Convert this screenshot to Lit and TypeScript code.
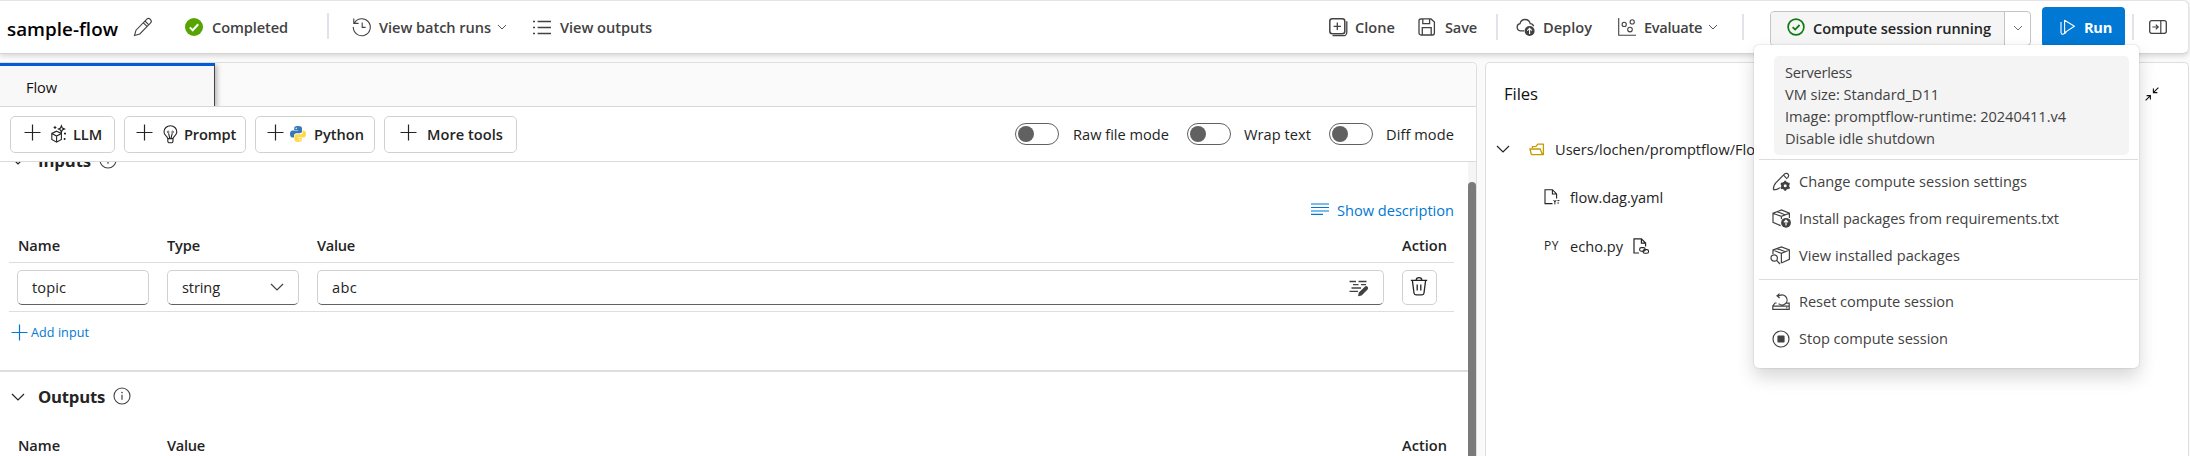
import { LitElement, html, svg, css, TemplateResult } from "lit";
import { customElement, property } from "lit/decorators.js";

const icons: Record<string, [number, number, TemplateResult]> = {
  pencil: [20, 20, svg`<path d="M1.5 18.5 L3 13.2 L13.6 2.4 a2.6 2.6 0 0 1 3.8 3.8 L6.8 17 Z M12 4 L15.8 7.8 M10.4 5.8 L14 9.4"/>`],
  done: [18, 18, svg`<circle cx="9" cy="9" r="9" fill="#57a300" stroke="none"/><path d="M4.8 9.4 L7.7 12.2 L13.2 6.2" stroke="#fff" stroke-width="2"/>`],
  history: [20, 20, svg`<path d="M2.3 6.2 A8.5 8.5 0 1 1 1.3 10 M1.8 1.6 V6.4 H6.6 M10.2 5.6 V10.4 H13.6"/>`],
  list: [18, 15, svg`<path d="M4.6 1.5 H18 M4.6 7.5 H18 M4.6 13.5 H18" stroke-width="1.3"/><path d="M0 1.5 H2 M0 7.5 H2 M0 13.5 H2 " stroke-width="1.6"/>`],
  chevS: [10, 10, svg`<path d="M1 3 L5 7 L9 3" stroke-width=".9"/>`],
  chev: [14, 14, svg`<path d="M1 4 L7 10 L13 4" stroke-width="1.2"/>`],
  clone: [19, 19, svg`<rect x=".8" y=".8" width="15" height="15" rx="2.5" stroke-width="1.5"/><path d="M8.3 4.6 V12 M4.6 8.3 H12 M17.8 3.2 V14.2 a3.5 3.5 0 0 1 -3.5 3.5 H3.6" stroke-width="1.3"/>`],
  save: [18, 18, svg`<path d="M3 .9 H13 L16.4 4 V15 a2 2 0 0 1 -2 2 H3 a2 2 0 0 1 -2 -2 V3 a2 2 0 0 1 2 -2 Z M4.8 1 V5.6 H11.6 V1 M4.3 17 V9.6 H13.2 V17" stroke-width="1.3"/>`],
  deploy: [19, 19, svg`<path d="M8.2 12.8 H4.4 a3.6 3.6 0 0 1 -.4 -7.1 a5.2 5.2 0 0 1 10.2 0 a3.6 3.6 0 0 1 3.4 2.6" stroke-width="1.3"/><circle cx="13.6" cy="13" r="5" fill="currentColor" stroke="none"/><path d="M13.6 16 V10.6 M11.3 12.6 L13.6 10.2 L15.9 12.6" stroke="#fff" stroke-width="1.1"/>`],
  evaluate: [18, 18, svg`<path d="M.7 0 V17.2 H18"/><circle cx="6.2" cy="6.4" r="2.1"/><circle cx="14.2" cy="3.9" r="2.1"/><circle cx="12" cy="11.6" r="2.3"/>`],
  running: [18, 18, svg`<circle cx="9" cy="9" r="7.9" stroke-width="1.7"/><path d="M5.6 9.2 L8.1 11.6 L12.6 7" stroke-width="1.8"/>`],
  play: [16, 18, svg`<path d="M4.6 2.2 L14.4 8.2 L4.6 14.6 Z M1 4 V14.6 a1.6 1.6 0 0 0 2.4 1.4 L6.4 14.4" stroke-width="1.1" stroke-linejoin="round"/>`],
  dock: [18, 14, svg`<rect x=".7" y=".7" width="16.6" height="12.6" rx="2" stroke-width="1.3"/><path d="M11.8 1 V13 M3.4 7 H9 M6.8 4.6 L9.2 7 L6.8 9.4" stroke-width="1.2"/>`],
  plus: [17, 17, svg`<path d="M8.5 .5 V16.5 M.5 8.5 H16.5" stroke-width="1.2"/>`],
  llm: [16, 18, svg`<path d="M5.6 6.2 L10.4 8.4 V14.4 L5.6 17.2 L.8 14.4 V8.4 Z M.8 8.4 L5.6 11 L10.4 8.4 M5.6 11 V17 M10.4 .8 L11.3 3 L13.6 4 L11.3 5 L10.4 7.2 L9.5 5 L7.4 4 L9.5 3 Z" stroke-width="1.1"/><path d="M4 1 V4 M2.6 2.5 H5.4 M14 7.6 V9.6 M13 8.6 H15 M13.6 13 V15 M12.6 14 H14.6" stroke-width="1.1"/>`],
  bulb: [15, 19, svg`<path d="M4.8 13.6 C4.6 11.4 1 10.4 1 6.9 a6.3 6.1 0 0 1 12.8 0 C13.8 10.4 10.2 11.4 10 13.6 Z M4.8 14 V16 a1.8 1.8 0 0 0 1.8 1.8 H8.2 A1.8 1.8 0 0 0 10 16 V14 M6.8 13.4 L5.6 8.4 M8 13.4 L9.2 8.4" stroke-width="1.1"/><circle cx="5.2" cy="7" r=".9" stroke-width=".7"/><circle cx="9.6" cy="7" r=".9" stroke-width=".7"/>`],
  python: [16, 16, svg`<path d="M7.8 0 C4.4 0 4.2 1.4 4.2 2.4 V4 H8.2 V4.6 H2.6 C.8 4.6 0 6 0 8 s.8 3.6 2.4 3.6 H4 V9.6 C4 8.2 5 7.2 6.4 7.2 H10 c1.2 0 2 -.8 2 -2 V2.4 C12 .8 10.6 0 7.8 0 Z" fill="#3478b8" stroke="none"/><path d="M8.2 16 C11.6 16 11.8 14.6 11.8 13.6 V12 H7.8 V11.4 H13.4 C15.2 11.4 16 10 16 8 S15.2 4.4 13.6 4.4 H12.6 V6.4 C12.6 7.8 11.6 8.2 10.2 8.2 H6.4 c-1.2 0 -2 .8 -2 2 V13.6 C4.4 15.2 5.4 16 8.2 16 Z" fill="#ffd94a" stroke="none"/><circle cx="6.2" cy="2.2" r=".8" fill="#fff" stroke="none"/><circle cx="9.8" cy="13.8" r=".8" fill="#fff" stroke="none"/>`],
  info: [18, 18, svg`<circle cx="9" cy="9" r="8"/><path d="M9 7.8 V12.8" stroke-width="1.2"/><circle cx="9" cy="5.6" r=".8" fill="currentColor" stroke="none"/>`],
  lines: [18, 12, svg`<path d="M0 1 H18 M0 4.5 H18 M0 8 H18 M0 11.3 H12" stroke-width="1.2"/>`],
  edit: [20, 18, svg`<path d="M.5 3.5 H7 M9.5 3.5 H17.5 M4 6.6 H9.5 M12 6.6 H17 M2.5 10 H12 M.5 13.4 H9" stroke-width="1.3"/><path d="M9 18.2 L9.8 14.6 L15.8 8.8 a1.9 1.9 0 0 1 2.8 2.7 L12.6 17.4 Z" fill="currentColor" stroke="none"/>`],
  trash: [18, 19, svg`<path d="M.8 3.4 H17.2 M6.2 3.2 a2.8 2.6 0 0 1 5.6 0 M2.4 3.6 L4 16 a2 2 0 0 0 2 1.8 H12 a2 2 0 0 0 2 -1.8 L15.6 3.6 M7.2 7.4 V13.4 M10.8 7.4 V13.4" stroke-width="1.3"/>`],
  folder: [16, 13, svg`<path d="M3.4 5 V3.6 L7 3.4 L8.8 1.2 H14.4 V11.6 H2.4 L.9 6 H11.2 L13.4 11.4" stroke-width="1.3" stroke-linejoin="round"/>`],
  yaml: [16, 16, svg`<path d="M8.5 14.6 H1 V.7 H8.4 L12.6 4.9 V9.6 M8.4 .8 V5 H12.6" stroke-width="1.1"/><path d="M9.6 11 L10.9 13 L12.2 11 M10.9 13 V15.4 M13.4 11.6 H15.4 M13.4 14 H15" stroke-width="1"/>`],
  link: [17, 17, svg`<path d="M6 15 H1 V.8 H8.4 L12.6 5 V8.4 M8.4 .9 V5.1 H12.6" stroke-width="1.2"/><rect x="6.6" y="9.6" width="5.6" height="3.6" rx="1.8" stroke-width="1.1"/><rect x="10" y="11.6" width="5.6" height="3.6" rx="1.8" stroke-width="1.1"/>`],
  shrink: [14, 14, svg`<path d="M13.4 .6 L8.6 5.4 M8.4 1.6 V5.6 H12.4 M.6 13.4 L5.2 8.8 M1.6 8.6 H5.4 V12.4" stroke-width="1.1"/>`],
  setting: [19, 19, svg`<path d="M1.4 17.8 C1.4 14.4 2.4 12.2 4 10.6 L12.4 2.2 a2.4 2.4 0 0 1 4.2 1 c.2 1.6 -.4 2.2 -1.2 3 M11.6 3.2 L15 6.8 M1.4 17.8 C4.6 17.8 6.4 17 8 15.6" stroke-width="1.2"/><circle cx="13.2" cy="13.8" r="2.8" stroke-width="2.6"/><path d="M13.2 8.8 V10.6 M13.2 17 V18.8 M8.8 11.3 L10.4 12.2 M16 15.4 L17.6 16.3 M8.8 16.3 L10.4 15.4 M16 12.2 L17.6 11.3" stroke-width="2"/>`],
  install: [19, 19, svg`<path d="M8.6 16.6 L1 13.4 V4.2 L9.4 1 L17.4 4.2 V9 M1 4.2 L9.4 7.4 L17.4 4.2 M9.4 7.4 V10 M5.2 2.6 L13.4 6" stroke-width="1.2"/><circle cx="14" cy="13.8" r="4.9" fill="currentColor" stroke="none"/><path d="M14 16.6 V11.6 M11.9 13.4 L14 11.2 L16.1 13.4" stroke="#fff" stroke-width="1.2"/>`],
  installed: [21, 19, svg`<path d="M3 8 V4 L11.4 1 L19.4 4 V13.4 L11.4 17 M3 4 L11.4 7.4 L19.4 4 M11.4 7.4 V17 M7 2.6 L15.4 5.8" stroke-width="1.2"/><circle cx="4.2" cy="12" r="3.2" stroke-width="1.2"/><path d="M6.6 14.4 L10 18" stroke-width="1.3"/>`],
  reset: [18, 18, svg`<path d="M4.6 10 H3 L.8 13 V16.4 H17.2 V10.2 H14 M.8 13.2 H17.2 M6.6 10.6 a5 5 0 1 0 1 -8 H5 M7.6 .6 L5 2.8 L7.6 5" stroke-width="1.2"/><path d="M14 14.8 H15.4" stroke-width="1"/>`],
  stop: [18, 18, svg`<circle cx="9" cy="9" r="8" stroke-width="1.2"/><rect x="5.4" y="5.4" width="7.2" height="7.2" rx="1" fill="currentColor" stroke="none"/>`],
};

@customElement("ui-icon")
class UiIcon extends LitElement {
  @property() name = "";
  static styles = css`
    :host { display: block; flex: none; }
    svg { display: block; fill: none; stroke: currentColor; stroke-width: 1.1; overflow: visible; }
  `;
  render() {
    const [w, h, body] = icons[this.name];
    return html`<svg width=${w} height=${h} viewBox="0 0 ${w} ${h}">${body}</svg>`;
  }
}

/** Single line of text whose tracking is adjusted to occupy a given width. */
@customElement("ui-label")
class UiLabel extends LitElement {
  @property({ type: Number }) w = 0;
  @property() text = "";
  static styles = css`
    :host { display: block; flex: none; white-space: pre; }
    span { display: inline-block; }
  `;
  render() {
    return html`<span>${this.text}</span>`;
  }
  firstUpdated() {
    const s = this.renderRoot.querySelector("span") as HTMLElement;
    const natural = s.getBoundingClientRect().width;
    s.style.letterSpacing = `${(this.w - natural) / this.text.length}px`;
    this.style.width = `${this.w}px`;
  }
}

const t = (text: string, w: number, cls = "") => html`<ui-label class=${cls} .text=${text} .w=${w}></ui-label>`;
const i = (name: string, cls = "") => html`<ui-icon class=${cls} .name=${name}></ui-icon>`;

@customElement("app-root")
class AppRoot extends LitElement {
  static styles = css`
    :host {
      display: block; position: relative; width: 2190px; height: 456px; overflow: hidden;
      background: #fafafa; color: #242424;
      font: 14.6px/24px "Open Sans", "Noto Sans", sans-serif;
    }
    * { box-sizing: border-box; }
    .semi { font-weight: 600; }
    .bold { font-weight: 700; }
    .row { display: flex; align-items: center; }
    .header {
      display: flex; align-items: center; width: 2189px; height: 54px; padding: 0 21px 0 7px;
      background: #fff; border: 1px solid #e4e4e4; border-left: 0; border-bottom-color: #d4d4d4;
      border-radius: 0 6px 6px 0; box-shadow: 0 2px 5px rgba(0,0,0,.14); color: #424242;
    }
    .title { font-size: 18.8px; font-weight: 600; color: #000; padding-top: 3px; }
    .pen { margin-left: 15px; }
    .status { gap: 9px; margin-left: 32px; }
    .rule { width: 2px; height: 26px; background: #e1e3e8; flex: none; }
    .r1 { margin-left: 39px; margin-top: -2px; }
    .batch { gap: 7px; margin-left: 23px; }
    .batch .c { margin-left: -1px; }
    .outs { gap: 9px; margin-left: 26px; }
    .right { margin-left: auto; }
    .clone { gap: 7px; }
    .save { gap: 9px; margin-left: 23px; }
    .r2 { margin-left: 19px; }
    .dep { margin-left: 18px; gap: 8px; }
    .eva { margin-left: 26px; gap: 8px; }
    .eva .c { margin-left: -2px; }
    .r3 { margin-left: 24px; }
    .compute {
      display: flex; width: 261px; height: 35px; margin: 2px 0 0 26px; border: 1px solid #c4c4c4;
      border-radius: 4px; color: #242424; background: #fff; overflow: hidden;
    }
    .session { display: flex; align-items: center; gap: 8px; width: 234px; padding-left: 16px; background: #f5f5f5; border-right: 1px solid #c4c4c4; }
    .ok { color: #107c10; margin-top: -2px; }
    .more { flex: 1; display: grid; place-items: center; color: #616161; }
    .run {
      display: flex; align-items: center; gap: 8px; width: 83px; height: 40px; margin: 0 0 0 11px;
      padding-left: 18px; background: #0078d4; color: #fff; border-radius: 4px;
    }
    .r4 { margin-left: 7px; }
    .dock { margin-left: 15px; }

    .body { display: flex; gap: 8px; height: 394px; margin-top: 8px; }
    .main { width: 1477px; height: 394px; border: 1px solid #dedede; border-left: 0; border-bottom: 0; border-radius: 0 5px 0 0; background: #fff; overflow: hidden; }
    .tabs { height: 44px; background: #fafafa; border-bottom: 1px solid #d8d8d8; }
    .tab {
      width: 215px; height: 43px; padding: 9px 0 0 26px; border-top: 3px solid #015cda;
      border-right: 1px solid #444; background: #f8f8f8; box-shadow: 2px 2px 5px rgba(0,0,0,.28); color: #111;
      clip-path: inset(0 -10px 0 0);
    }
    .tools { display: flex; align-items: center; height: 55px; padding: 0 22px 0 10px; border-bottom: 1px solid #dadada; }
    .btn { display: flex; align-items: center; height: 37px; border: 1px solid #d1d1d1; border-radius: 5px; padding-left: 13px; margin-right: 9px; }
    .llm { width: 105px; } .prompt { width: 122px; padding-left: 11px; } .python { width: 120px; padding-left: 11px; } .moret { width: 133px; padding-left: 15px; }
    .plus { margin-top: -3px; }
    .g10 { margin-left: 10px; } .g7 { margin-left: 6px; } .g8 { margin-left: 8px; }
    .toggles { display: flex; align-items: center; margin: -1px 0 0 auto; font-weight: 400; }
    .switch { display: flex; align-items: center; width: 44px; height: 22px; border: 1px solid #616161; border-radius: 11px; padding-left: 2px; margin-right: 14px; }
    .knob { width: 16px; height: 16px; border-radius: 50%; background: #616161; }
    .sw2 { margin-left: 18px; margin-right: 13px; }
    .scroll { display: flex; height: 294px; overflow: hidden; }
    .content { width: 1468px; height: 294px; overflow: hidden; }
    .track { width: 8px; padding-top: 20px; background: #f5f5f5; }
    .thumb { height: 300px; background: #7a7a7a; border-radius: 4px; }
    .head { display: flex; align-items: center; height: 24px; padding-left: 11px; font-size: 16.7px; font-weight: 700; }
    .inhead { margin-top: -13px; }
    .head .name { margin-left: 13px; }
    .info { color: #424242; margin: -2px 0 0 8px; }
    .show { display: flex; align-items: center; justify-content: flex-end; gap: 8px; height: 24px; margin-top: 25px; padding-right: 14px; color: #0078d4; }
    .show .ln { margin-top: -3px; }
    .grid { display: grid; grid-template-columns: 132px 132px 1067px 44px; gap: 18px; margin: 0 14px 0 9px; padding-left: 8px; border-bottom: 1px solid #dedede; }
    .th { align-items: center; height: 34px; margin-top: 7px; padding-bottom: 2px; font-weight: 600; }
    .th .first { padding-left: 1px; }
    .outs-th { margin-top: 20px; grid-template-columns: 132px 1217px 44px; }
    .tr { height: 49px; padding-top: 7px; }
    .field { display: flex; align-items: center; justify-content: space-between; height: 35px; padding: 0 14px 1px; border: 1px solid #d1d1d1; border-bottom-color: #616161; border-radius: 5px; }
    .field ui-icon { color: #424242; }
    .del { display: grid; place-items: center; width: 35px; height: 35px; padding: 0 1px 2px 0; border: 1px solid #d1d1d1; border-radius: 5px; }
    .add { display: flex; align-items: center; gap: 3px; height: 24px; margin-top: 8px; padding-left: 11px; color: #0078d4; font-size: 12.6px; }
    .add .txt { padding-top: 2px; }
    .sep { height: 2px; margin-top: 26px; background: #dedede; }
    .outhead { margin-top: 13px; }

    .files { width: 704px; height: 394px; background: #fff; border: 1px solid #dedede; border-bottom: 0; border-radius: 5px 5px 0 0; }
    .fhead { display: flex; align-items: center; justify-content: space-between; height: 24px; margin: 19px 29px 0 18px; font-size: 16.7px; color: #111; }
    .fold { display: flex; align-items: center; height: 24px; margin: 31px 0 0 10px; }
    .fold .fi { color: #c19c00; margin-left: 19px; }
    .fold .nm { margin-left: 10px; }
    .file { display: flex; align-items: center; height: 24px; margin: 24px 0 0 58px; }
    .file2 { margin-top: 25px; }
    .file .nm { margin-left: 10px; }
    .file .nm2 { margin-left: 11px; }
    .file .lk { margin-left: 10px; }
    .py { font-size: 12px; }

    .menu {
      position: absolute; left: 1754px; top: 45px; width: 385px; height: 323px; padding: 11px 1px 0 5px;
      background: #fff; border-radius: 5px; box-shadow: 0 0 2px rgba(0,0,0,.2), 0 9px 18px rgba(0,0,0,.16); color: #424242;
    }
    .vm { width: 355px; height: 99px; margin-left: 15px; padding: 5px 0 0 11px; background: #f4f4f4; border-radius: 5px; line-height: 22px; }
    .line { height: 1px; background: #dcdcdc; }
    .l1 { margin: 4px 0 3px; } .l2 { margin: 5px 0 3px; }
    .item { display: grid; grid-template-columns: 27px 1fr; align-items: center; height: 37px; margin-left: 13px; }
    .item .ic { justify-self: start; }
    .item .tx { margin-top: -1px; }
    .item .out { margin-left: -2px; }
  `;
  render() {
    return html`
      <header class="header">
        ${t("sample-flow", 111, "title")}${i("pencil", "pen")}
        <div class="row status">${i("done")}${t("Completed", 76, "semi")}</div>
        <div class="rule r1"></div>
        <div class="row batch">${i("history")}${t("View batch runs", 112, "semi")}${i("chevS", "c")}</div>
        <div class="row outs">${i("list")}${t("View outputs", 92, "semi")}</div>
        <div class="row right">
          <div class="row clone">${i("clone")}${t("Clone", 40, "semi")}</div>
          <div class="row save">${i("save")}${t("Save", 32, "semi")}</div>
          <div class="rule r2"></div>
          <div class="row dep">${i("deploy")}${t("Deploy", 49, "semi")}</div>
          <div class="row eva">${i("evaluate")}${t("Evaluate", 58, "semi")}${i("chevS", "c")}</div>
          <div class="rule r3"></div>
          <div class="compute">
            <div class="session semi">${i("running", "ok")}${t("Compute session running", 178)}</div>
            <div class="more">${i("chevS")}</div>
          </div>
          <div class="run bold">${i("play")}${t("Run", 28)}</div>
          <div class="rule r4"></div>
          ${i("dock", "dock")}
        </div>
      </header>
      <div class="body">
        <section class="main">
          <div class="tabs"><div class="tab">${t("Flow", 31)}</div></div>
          <div class="tools semi">
            <div class="btn llm">${i("plus", "plus")}${i("llm", "g10")}${t("LLM", 29, "g7")}</div>
            <div class="btn prompt">${i("plus", "plus")}${i("bulb", "g10")}${t("Prompt", 52, "g7")}</div>
            <div class="btn python">${i("plus", "plus")}${i("python", "g7")}${t("Python", 50, "g8")}</div>
            <div class="btn moret">${i("plus", "plus")}${t("More tools", 76, "g10")}</div>
            <div class="toggles">
              <div class="switch"><div class="knob"></div></div>${t("Raw file mode", 96)}
              <div class="switch sw2"><div class="knob"></div></div>${t("Wrap text", 67)}
              <div class="switch sw2"><div class="knob"></div></div>${t("Diff mode", 68)}
            </div>
          </div>
          <div class="scroll">
            <div class="content">
              <div class="head inhead">${i("chev")}${t("Inputs", 53, "name")}${i("info", "info")}</div>
              <div class="show">${i("lines", "ln")}${t("Show description", 117)}</div>
              <div class="grid th">${t("Name", 42, "first")}${t("Type", 33)}${t("Value", 38)}${t("Action", 45)}</div>
              <div class="grid tr">
                <div class="field">${t("topic", 34)}</div>
                <div class="field">${t("string", 38)}${i("chev")}</div>
                <div class="field">${t("abc", 25)}${i("edit")}</div>
                <div class="del">${i("trash")}</div>
              </div>
              <div class="add">${i("plus")}${t("Add input", 58, "txt")}</div>
              <div class="sep"></div>
              <div class="head outhead">${i("chev")}${t("Outputs", 67, "name")}${i("info", "info")}</div>
              <div class="grid th outs-th">${t("Name", 42, "first")}${t("Value", 38)}${t("Action", 45)}</div>
            </div>
            <div class="track"><div class="thumb"></div></div>
          </div>
        </section>
        <section class="files">
          <div class="fhead">${t("Files", 34)}${i("shrink")}</div>
          <div class="fold">${i("chev")}${i("folder", "fi")}${t("Users/lochen/promptflow/Flo", 200, "nm")}</div>
          <div class="file">${i("yaml")}${t("flow.dag.yaml", 93, "nm")}</div>
          <div class="file file2">${t("PY", 15, "py")}${t("echo.py", 53, "nm2")}${i("link", "lk")}</div>
        </section>
      </div>
      <div class="menu">
        <div class="vm">
          ${t("Serverless", 67)}${t("VM size: Standard_D11", 154)}
          ${t("Image: promptflow-runtime: 20240411.v4", 281)}${t("Disable idle shutdown", 150)}
        </div>
        <div class="line l1"></div>
        <div class="item">${i("setting", "ic")}${t("Change compute session settings", 228, "tx")}</div>
        <div class="item">${i("install", "ic")}${t("Install packages from requirements.txt", 260, "tx")}</div>
        <div class="item">${i("installed", "ic out")}${t("View installed packages", 161, "tx")}</div>
        <div class="line l2"></div>
        <div class="item">${i("reset", "ic")}${t("Reset compute session", 155, "tx")}</div>
        <div class="item">${i("stop", "ic")}${t("Stop compute session", 149, "tx")}</div>
      </div>
    `;
  }
}
